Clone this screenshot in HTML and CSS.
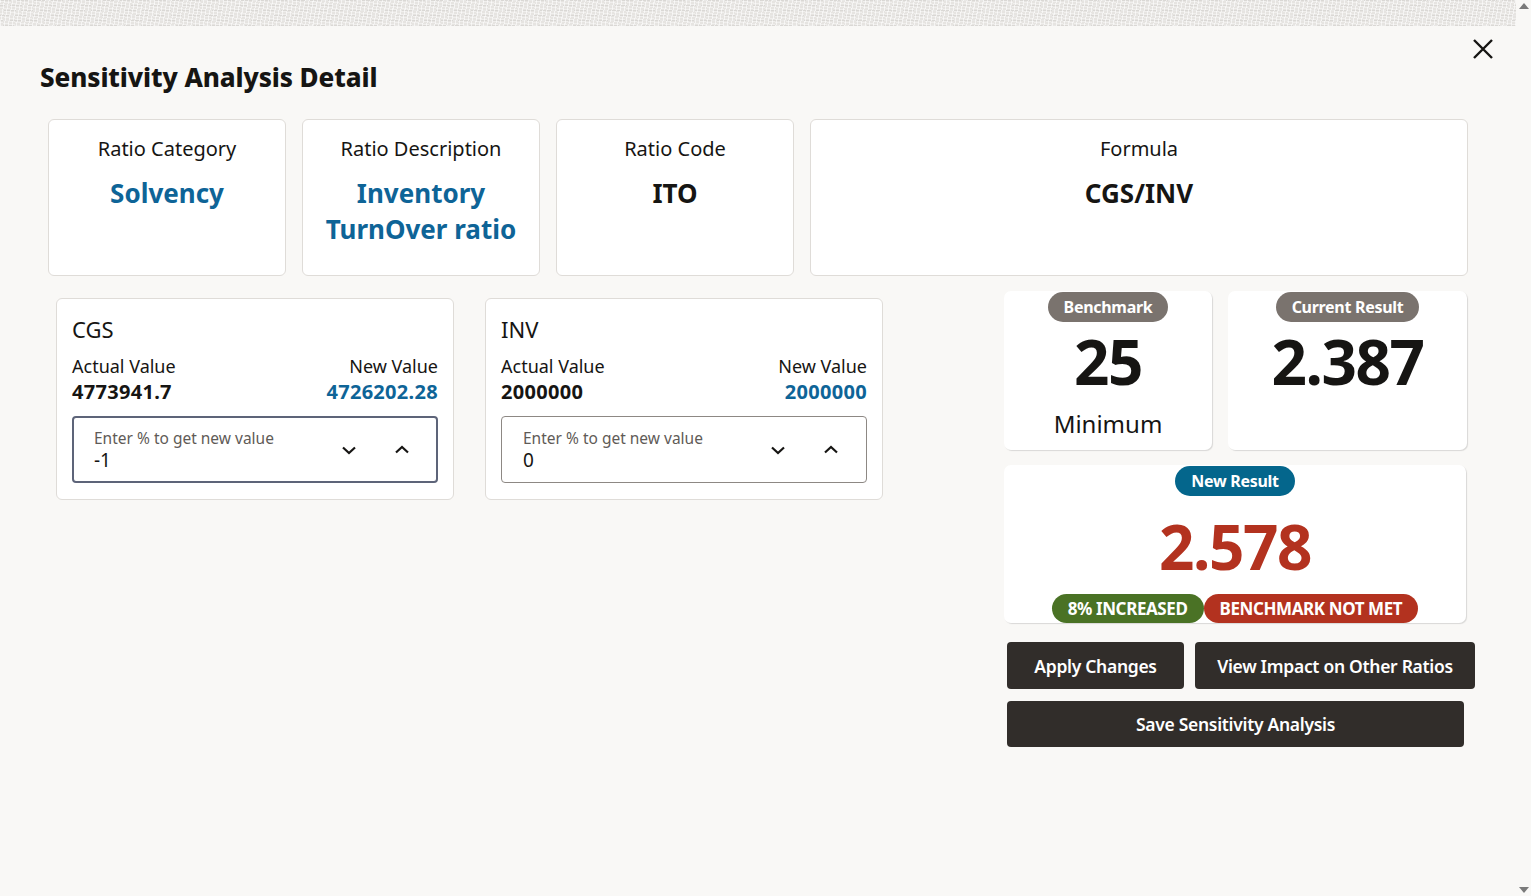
FILE: index.html
```html
<!DOCTYPE html>
<html lang="en">
<head>
<meta charset="utf-8">
<title>Sensitivity Analysis Detail</title>
<link rel="stylesheet" href="styles.css">
</head>
<body>
<div class="topstrip"></div>
<div class="scroll-up"></div>
<div class="scroll-down"></div>
<div class="dialog">
  <div class="dlg-head">
    <h1 class="dlg-title">Sensitivity Analysis Detail</h1>
    <button class="close-btn" aria-label="Close">
      <svg width="22" height="22" viewBox="0 0 22 22"><path d="M2 2L20 20M20 2L2 20" stroke="#161513" stroke-width="2.4" fill="none"/></svg>
    </button>
  </div>

  <div class="info-row">
    <div class="info-card w-sm">
      <div class="info-label">Ratio Category</div>
      <div class="info-value blue">Solvency</div>
    </div>
    <div class="info-card w-sm">
      <div class="info-label">Ratio Description</div>
      <div class="info-value blue">Inventory<br>TurnOver ratio</div>
    </div>
    <div class="info-card w-sm">
      <div class="info-label">Ratio Code</div>
      <div class="info-value">ITO</div>
    </div>
    <div class="info-card w-lg">
      <div class="info-label">Formula</div>
      <div class="info-value">CGS/INV</div>
    </div>
  </div>

  <div class="main-row">
    <div class="inputs">
      <div class="var-card">
        <div class="var-name">CGS</div>
        <div class="var-vals">
          <div class="vcol">
            <div class="vlabel">Actual Value</div>
            <div class="vnum">4773941.7</div>
          </div>
          <div class="vcol right">
            <div class="vlabel">New Value</div>
            <div class="vnum blue">4726202.28</div>
          </div>
        </div>
        <div class="num-input focused">
          <div class="ni-text">
            <div class="ni-label">Enter % to get new value</div>
            <div class="ni-value">-1</div>
          </div>
          <div class="ni-btns">
            <svg class="chev" width="16" height="10" viewBox="0 0 16 10"><path d="M2 2.5L8 8L14 2.5" stroke="#161513" stroke-width="2.2" fill="none"/></svg>
            <svg class="chev" width="16" height="10" viewBox="0 0 16 10"><path d="M2 7.5L8 2L14 7.5" stroke="#161513" stroke-width="2.2" fill="none"/></svg>
          </div>
        </div>
      </div>
      <div class="var-card">
        <div class="var-name">INV</div>
        <div class="var-vals">
          <div class="vcol">
            <div class="vlabel">Actual Value</div>
            <div class="vnum">2000000</div>
          </div>
          <div class="vcol right">
            <div class="vlabel">New Value</div>
            <div class="vnum blue">2000000</div>
          </div>
        </div>
        <div class="num-input">
          <div class="ni-text">
            <div class="ni-label">Enter % to get new value</div>
            <div class="ni-value">0</div>
          </div>
          <div class="ni-btns">
            <svg class="chev" width="16" height="10" viewBox="0 0 16 10"><path d="M2 2.5L8 8L14 2.5" stroke="#161513" stroke-width="2.2" fill="none"/></svg>
            <svg class="chev" width="16" height="10" viewBox="0 0 16 10"><path d="M2 7.5L8 2L14 7.5" stroke="#161513" stroke-width="2.2" fill="none"/></svg>
          </div>
        </div>
      </div>
    </div>

    <div class="results">
      <div class="res-top">
        <div class="res-card bench">
          <span class="badge gray">Benchmark</span>
          <div class="big">25</div>
          <div class="res-sub">Minimum</div>
        </div>
        <div class="res-card current">
          <span class="badge gray">Current Result</span>
          <div class="big">2.387</div>
        </div>
      </div>
      <div class="res-card newres">
        <span class="badge teal">New Result</span>
        <div class="big red">2.578</div>
        <div class="status">
          <span class="badge green caps">8% INCREASED</span><span class="badge redbg caps">BENCHMARK NOT MET</span>
        </div>
      </div>
      <div class="btn-row">
        <button class="btn b-apply">Apply Changes</button>
        <button class="btn b-view">View Impact on Other Ratios</button>
      </div>
      <button class="btn b-save">Save Sensitivity Analysis</button>
    </div>
  </div>
</div>
</body>
</html>
```

FILE: styles.css
```css
* { box-sizing: border-box; }
html, body { margin: 0; padding: 0; }
body {
  width: 1531px;
  height: 896px;
  overflow: hidden;
  background: #f9f8f6;
  font-family: "Noto Sans", "Open Sans", sans-serif;
  color: #161513;
  position: relative;
}
.topstrip {
  height: 26px;
  width: 1516px;
  background-color: #e6e4e1;
  background-image:
    repeating-linear-gradient(100deg, rgba(255,255,255,0.6) 0 1px, transparent 1px 4px),
    repeating-linear-gradient(10deg, rgba(255,255,255,0.4) 0 1px, transparent 1px 3px),
    repeating-linear-gradient(0deg, rgba(190,188,185,0.3) 0 1px, transparent 1px 5px);
}
.scroll-up, .scroll-down {
  position: absolute;
  right: 2px;
  width: 0; height: 0;
  border-left: 5px solid transparent;
  border-right: 5px solid transparent;
}
.scroll-up { top: 3px; border-bottom: 6px solid #7a7a7a; }
.scroll-down { bottom: 3px; border-top: 6px solid #7a7a7a; }

.dialog { width: 1516px; }
.dlg-head {
  display: flex;
  justify-content: space-between;
  align-items: flex-start;
  padding: 11px 22px 0 40px;
  height: 93px;
}
.dlg-title {
  margin: 24px 0 0 0;
  font-size: 26px;
  line-height: 32px;
  font-weight: 800;
  letter-spacing: -0.1px;
}
.close-btn {
  background: none;
  border: 0;
  padding: 0;
  width: 22px; height: 22px;
  margin-top: 1px;
}
.close-btn svg { display: block; }

.info-row {
  display: flex;
  gap: 16px;
  margin-left: 48px;
}
.info-card {
  background: #fff;
  border: 1px solid #dfdcd8;
  border-radius: 6px;
  height: 157px;
  text-align: center;
  padding-top: 15px;
}
.w-sm { width: 238px; }
.w-lg { width: 658px; }
.info-label { font-size: 20px; line-height: 28px; }
.info-value {
  margin-top: 12px;
  font-size: 26px;
  line-height: 36px;
  font-weight: 700;
}
.blue { color: #0e6497; }

.main-row {
  display: flex;
  align-items: flex-start;
  margin-top: 15px;
  width: 1475px;
}
.inputs {
  display: flex;
  gap: 31px;
  margin-left: 56px;
  padding-top: 7px;
}
.var-card {
  width: 398px;
  height: 202px;
  background: #fff;
  border: 1px solid #dfdcd8;
  border-radius: 6px;
  padding: 15px 15px 0 15px;
}
.var-name { font-size: 22px; line-height: 30px; }
.var-vals {
  display: flex;
  justify-content: space-between;
  margin-top: 10px;
}
.vcol.right { text-align: right; }
.vlabel { font-size: 18px; line-height: 24px; }
.vnum { font-size: 20px; line-height: 27px; font-weight: 700; letter-spacing: 0.3px; }
.num-input {
  margin-top: 11px;
  height: 67px;
  border: 1px solid #8d8884;
  border-radius: 4px;
  display: flex;
  align-items: center;
  justify-content: space-between;
  padding: 0 27px 0 21px;
}
.num-input.focused { border: 2px solid #5d6479; padding-left: 20px; padding-right: 26px; }
.ni-label { font-size: 15.5px; line-height: 20px; color: #5f5b57; }
.ni-value { font-size: 19px; line-height: 24px; }
.ni-btns { display: flex; gap: 37px; align-items: center; }
.chev { display: block; }

.results {
  margin-left: auto;
  width: 471px;
}
.res-top { display: flex; gap: 16px; }
.res-card {
  background: #fff;
  border-radius: 7px;
  box-shadow: 1px 1px 1px rgba(0,0,0,0.13);
  display: flex;
  flex-direction: column;
  align-items: center;
  padding-top: 1px;
}
.bench { width: 208px; height: 159px; }
.current { width: 239px; height: 159px; }
.newres { width: 462px; height: 158px; margin-top: 15px; }
.badge {
  display: inline-block;
  height: 30px;
  line-height: 30px;
  border-radius: 15px;
  padding: 0 16px;
  color: #fff;
  font-size: 16px;
  font-weight: 700;
  letter-spacing: -0.3px;
}
.gray { background: #7a736e; }
.teal { background: #04668c; }
.green { background: #4a7225; }
.redbg { background: #b3321f; }
.caps { height: 29px; line-height: 29px; font-size: 17px; letter-spacing: -0.4px; }
.big {
  font-size: 62px;
  line-height: 64px;
  font-weight: 700;
  letter-spacing: -1.5px;
  margin-top: 7px;
}
.red { color: #b3321f; }
.res-sub { font-size: 24px; line-height: 32px; margin-top: 15px; }
.newres .big { margin-top: 18px; }
.status { display: flex; margin-top: 16px; }

.btn {
  background: #312d2a;
  color: #fff;
  border: 0;
  border-radius: 4px;
  font-family: inherit;
  font-size: 17.5px;
  font-weight: 600;
  letter-spacing: -0.3px;
  padding: 0;
  display: block;
}
.btn-row { display: flex; gap: 11px; margin-top: 19px; margin-left: 3px; }
.b-apply { width: 177px; height: 47px; }
.b-view { width: 280px; height: 47px; }
.b-save { width: 457px; height: 46px; margin-top: 12px; margin-left: 3px; }
```
